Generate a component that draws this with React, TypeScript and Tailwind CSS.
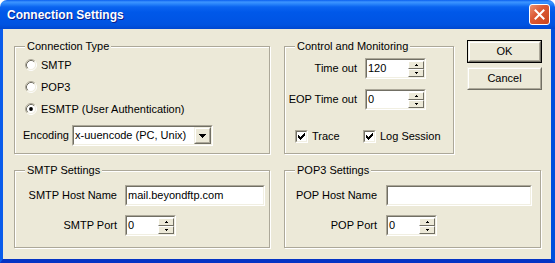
import React from "react";

function Sunken({ className = "", children }: { className?: string; children?: React.ReactNode }) {
  return (
    <div className={"border border-t-[#ACA899] border-l-[#ACA899] border-b-white border-r-white " + className}>
      <div className="w-full h-full border border-t-[#716F64] border-l-[#716F64] border-b-[#F1EFE2] border-r-[#F1EFE2] bg-white flex items-center">
        {children}
      </div>
    </div>
  );
}

function Raised({ className = "", children }: { className?: string; children?: React.ReactNode }) {
  return (
    <div className={"border border-t-[#F1EFE2] border-l-[#F1EFE2] border-b-[#716F64] border-r-[#716F64] " + className}>
      <div className="w-full h-full border border-t-white border-l-white border-b-[#ACA899] border-r-[#ACA899] bg-[#ECE9D8] flex items-center justify-center">
        {children}
      </div>
    </div>
  );
}

function SpinBtn({ up }: { up: boolean }) {
  return (
    <div className="w-[16px] h-[8px] border border-t-white border-l-white border-b-[#716F64] border-r-[#716F64] bg-[#ECE9D8] flex items-center justify-center">
      <svg width="3" height="2" viewBox="0 0 3 2" shapeRendering="crispEdges">
        {up ? (
          <>
            <rect x="1" y="0" width="1" height="1" fill="#000" />
            <rect x="0" y="1" width="3" height="1" fill="#000" />
          </>
        ) : (
          <>
            <rect x="0" y="0" width="3" height="1" fill="#000" />
            <rect x="1" y="1" width="1" height="1" fill="#000" />
          </>
        )}
      </svg>
    </div>
  );
}

function Spinner({ value, w }: { value: string; w: string }) {
  return (
    <Sunken className={w + " h-[21px]"}>
      <span className="flex-1 pl-[1px] leading-[13px]">{value}</span>
      <div className="flex flex-col gap-[0px] mr-[0px]">
        <SpinBtn up />
        <SpinBtn up={false} />
      </div>
    </Sunken>
  );
}

function Radio({ checked }: { checked?: boolean }) {
  return (
    <svg width="12" height="12" viewBox="0 0 12 12">
      <circle cx="6" cy="6" r="4.5" fill="#fff" />
      <path d="M2.11 9.89 A5.5 5.5 0 0 1 9.89 2.11" fill="none" stroke="#ACA899" strokeWidth="1" />
      <path d="M9.89 2.11 A5.5 5.5 0 0 1 2.11 9.89" fill="none" stroke="#fff" strokeWidth="1" />
      <path d="M2.82 9.18 A4.5 4.5 0 0 1 9.18 2.82" fill="none" stroke="#716F64" strokeWidth="1" />
      <path d="M9.18 2.82 A4.5 4.5 0 0 1 2.82 9.18" fill="none" stroke="#F1EFE2" strokeWidth="1" />
      {checked && <circle cx="6" cy="6" r="1.9" fill="#000" />}
    </svg>
  );
}

function Check() {
  return (
    <Sunken className="w-[13px] h-[13px]">
      <svg width="9" height="9" viewBox="0 0 9 9" shapeRendering="crispEdges">
        <rect x="7" y="1" width="1" height="1" fill="#000" />
        <rect x="6" y="2" width="2" height="1" fill="#000" />
        <rect x="1" y="3" width="1" height="1" fill="#000" />
        <rect x="5" y="3" width="3" height="1" fill="#000" />
        <rect x="1" y="4" width="2" height="1" fill="#000" />
        <rect x="4" y="4" width="3" height="1" fill="#000" />
        <rect x="1" y="5" width="5" height="1" fill="#000" />
        <rect x="2" y="6" width="3" height="1" fill="#000" />
        <rect x="3" y="7" width="1" height="1" fill="#000" />
      </svg>
    </Sunken>
  );
}

function Group({ label, className = "", children }: { label: string; className?: string; children?: React.ReactNode }) {
  return (
    <div className={"relative border border-[#ACA899] shadow-[inset_1px_1px_0_#fff,1px_1px_0_#fff] " + className}>
      <div className="absolute left-[10px] top-[-7px] px-[2px] bg-[#ECE9D8] leading-[13px] whitespace-nowrap">{label}</div>
      {children}
    </div>
  );
}

export default function App() {
  return (
    <div className="w-[555px] h-[263px] flex flex-col overflow-hidden bg-white text-[11px] text-black font-['Liberation_Sans',Arial,sans-serif]">
      {/* Title bar */}
      <div className="h-[29px] shrink-0 rounded-t-[7px] flex items-center justify-between pl-[7px] pr-[5px] bg-[linear-gradient(to_bottom,#0A5FEF_0%,#3D95FF_7%,#2B87FB_13%,#0A64F0_24%,#0058E9_42%,#0055E5_70%,#0053E0_86%,#0047D0_100%)]">
        <span className="text-white font-bold text-[12px] [text-shadow:1px_1px_0_#0A1E8C] tracking-[0px]">Connection Settings</span>
        <div className="w-[21px] h-[21px] rounded-[3px] border border-white bg-[linear-gradient(135deg,#EE9272_0%,#DC5A36_40%,#C9441C_100%)] flex items-center justify-center">
          <svg width="11" height="11" viewBox="0 0 11 11">
            <path d="M1.5 1.5 L9.5 9.5 M9.5 1.5 L1.5 9.5" stroke="#fff" strokeWidth="2" strokeLinecap="square" />
          </svg>
        </div>
      </div>
      {/* Body */}
      <div className="flex-1 bg-[#ECE9D8] border-l-[3px] border-r-[4px] border-b-[4px] border-l-[#0A5CEB] border-r-[#0050DD] border-b-[#0534C4] pl-[11px] pt-[11px]">
        <div className="flex items-start">
          <Group label="Connection Type" className="mt-[6px] w-[256px] h-[108px]">
            <div className="flex flex-col pt-[7px]">
              {[
                ["SMTP", false],
                ["POP3", false],
                ["ESMTP (User Authentication)", true],
              ].map(([t, c]) => (
                <div key={t as string} className="h-[22px] flex items-center pl-[10px] gap-[4px]">
                  <Radio checked={c as boolean} />
                  <span>{t as string}</span>
                </div>
              ))}
              <div className="mt-[5px] h-[21px] flex items-center pl-[8px]">
                <span className="w-[49px]">Encoding</span>
                <Sunken className="w-[141px] h-[21px]">
                  <span className="flex-1 pl-[1px]">x-uuencode (PC, Unix)</span>
                  <Raised className="w-[17px] h-[17px]">
                    <svg width="7" height="4" viewBox="0 0 7 4" shapeRendering="crispEdges">
                      <rect x="0" y="0" width="7" height="1" fill="#000" />
                      <rect x="1" y="1" width="5" height="1" fill="#000" />
                      <rect x="2" y="2" width="3" height="1" fill="#000" />
                      <rect x="3" y="3" width="1" height="1" fill="#000" />
                    </svg>
                  </Raised>
                </Sunken>
              </div>
            </div>
          </Group>
          <Group label="Control and Monitoring" className="ml-[14px] mt-[6px] w-[170px] h-[108px]">
            <div className="flex flex-col pt-[11px]">
              <div className="flex items-center">
                <span className="w-[72px] text-right">Time out</span>
                <div className="ml-[8px]">
                  <Spinner value="120" w="w-[61px]" />
                </div>
              </div>
              <div className="flex items-center mt-[10px]">
                <span className="w-[72px] text-right">EOP Time out</span>
                <div className="ml-[8px]">
                  <Spinner value="0" w="w-[61px]" />
                </div>
              </div>
              <div className="flex items-center mt-[18px] pl-[10px]">
                <div className="w-[68px] flex items-center gap-[4px]">
                  <Check />
                  <span>Trace</span>
                </div>
                <div className="flex items-center gap-[4px]">
                  <Check />
                  <span>Log Session</span>
                </div>
              </div>
            </div>
          </Group>
          <div className="ml-[13px] flex flex-col gap-[4px]">
            <div className="w-[75px] h-[23px] border border-black">
              <Raised className="w-full h-full">OK</Raised>
            </div>
            <Raised className="w-[75px] h-[23px]">Cancel</Raised>
          </div>
        </div>
        <div className="flex mt-[16px]">
          <Group label="SMTP Settings" className="w-[256px] h-[78px]">
            <div className="flex flex-col pt-[14px]">
              <div className="flex items-center">
                <span className="w-[102px] text-right">SMTP Host Name</span>
                <Sunken className="ml-[8px] w-[140px] h-[21px]">
                  <span className="pl-[1px]">mail.beyondftp.com</span>
                </Sunken>
              </div>
              <div className="flex items-center mt-[9px]">
                <span className="w-[102px] text-right">SMTP Port</span>
                <div className="ml-[8px]">
                  <Spinner value="0" w="w-[51px]" />
                </div>
              </div>
            </div>
          </Group>
          <Group label="POP3 Settings" className="ml-[14px] w-[257px] h-[78px]">
            <div className="flex flex-col pt-[14px]">
              <div className="flex items-center">
                <span className="w-[92px] text-right">POP Host Name</span>
                <Sunken className="ml-[9px] w-[146px] h-[21px]" />
              </div>
              <div className="flex items-center mt-[9px]">
                <span className="w-[92px] text-right">POP Port</span>
                <div className="ml-[9px]">
                  <Spinner value="0" w="w-[51px]" />
                </div>
              </div>
            </div>
          </Group>
        </div>
      </div>
    </div>
  );
}
